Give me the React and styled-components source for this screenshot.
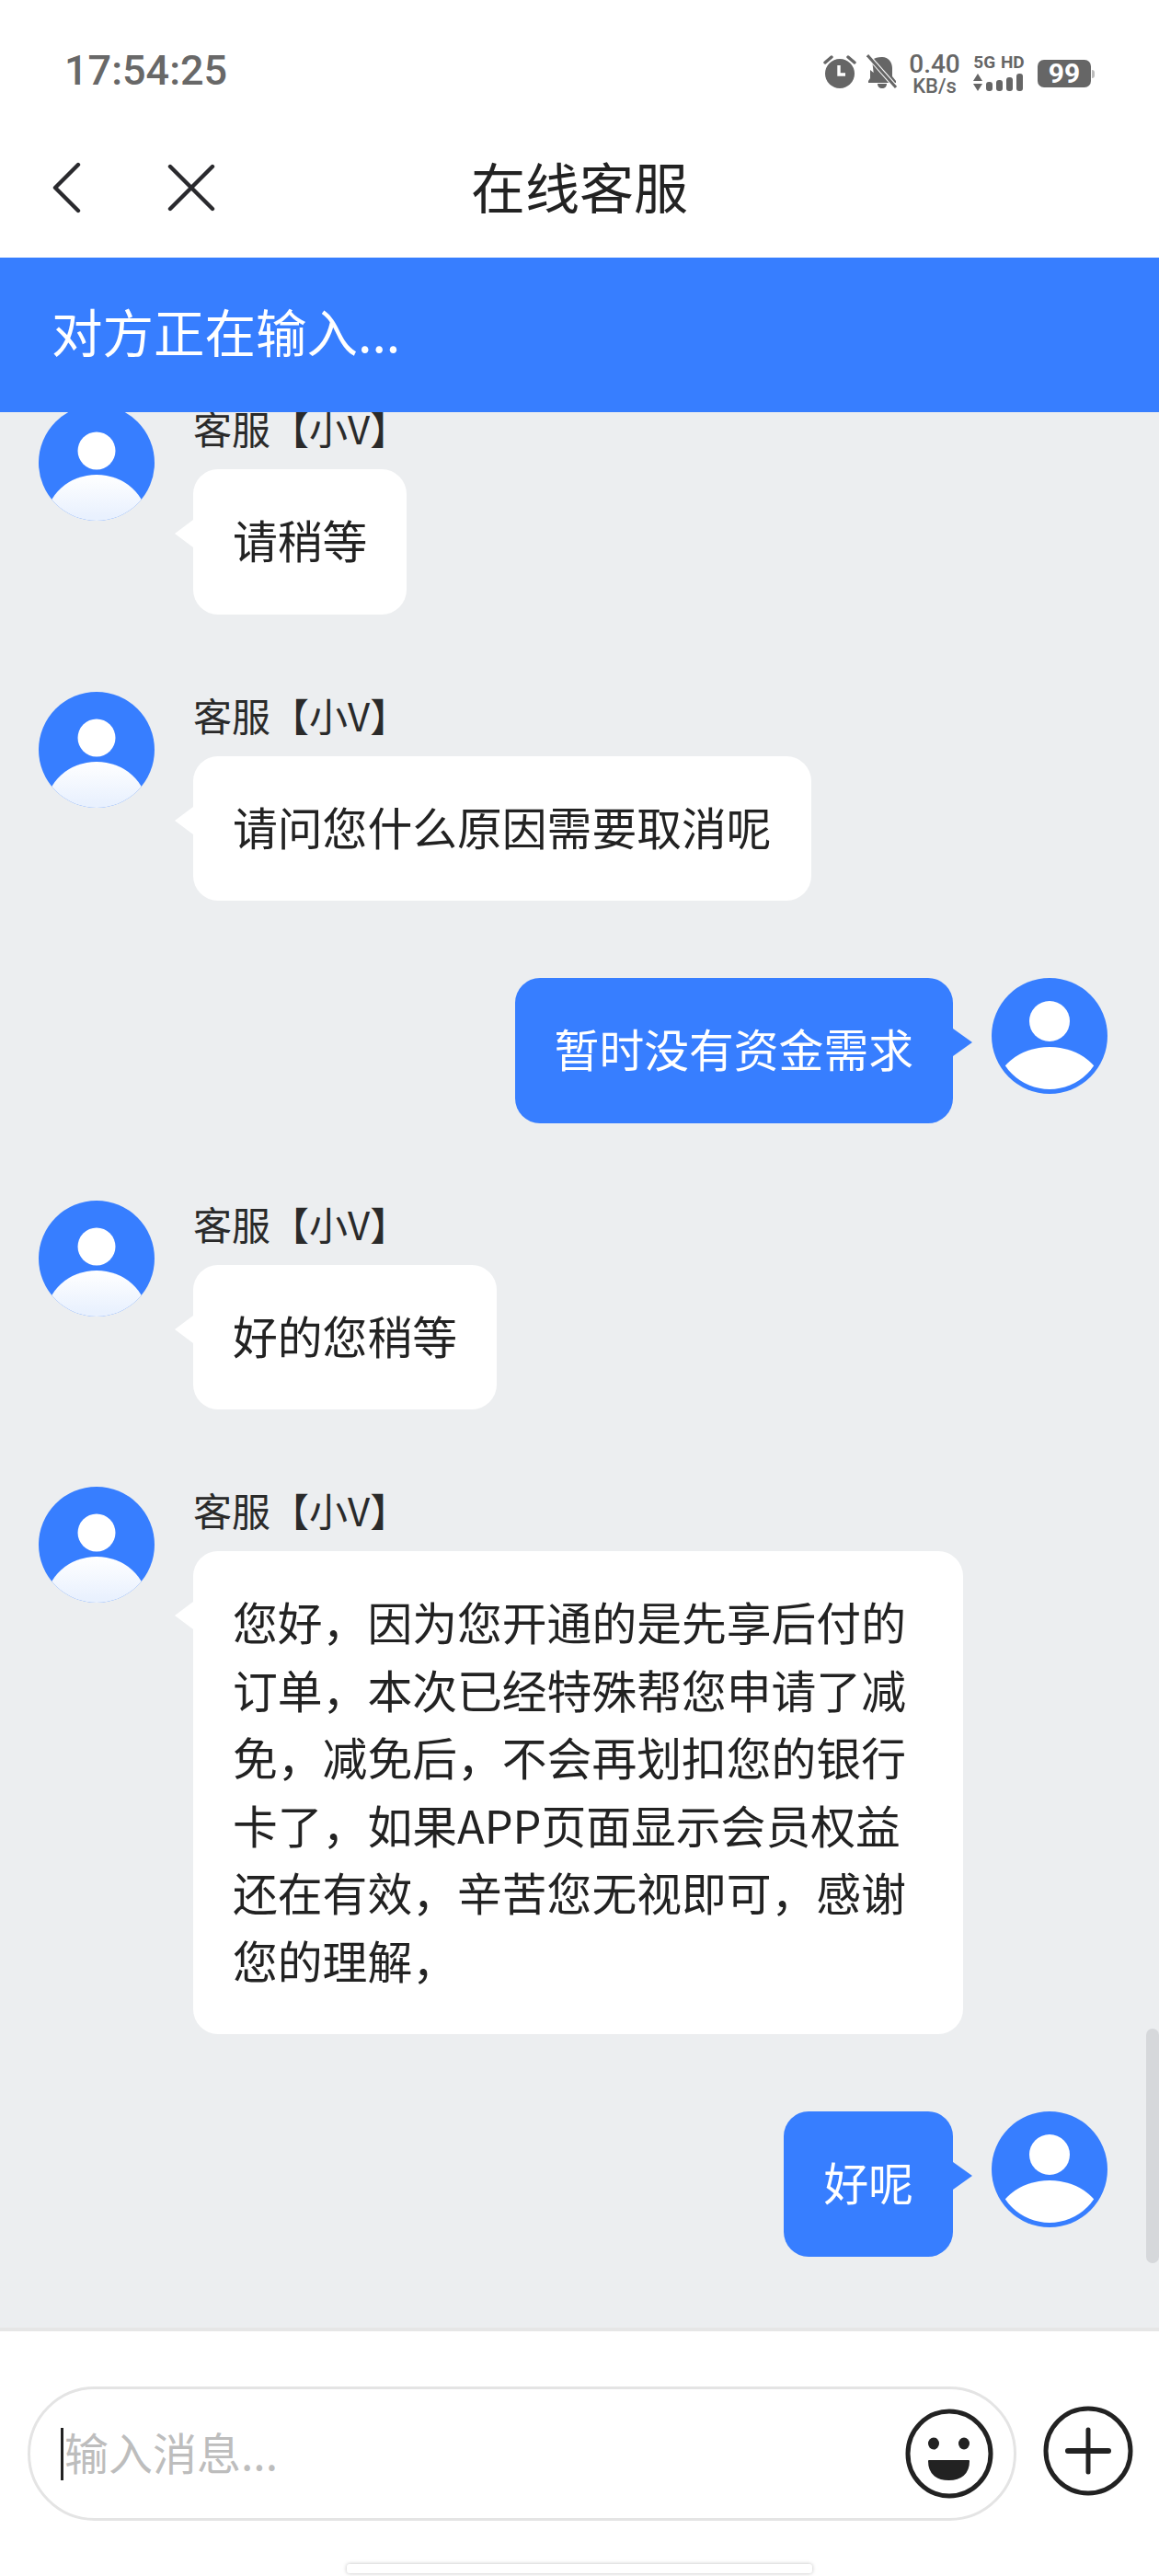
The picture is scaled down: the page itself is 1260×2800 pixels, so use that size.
import React from "react";
import styled, { createGlobalStyle } from "styled-components";

const Global = createGlobalStyle`
  html, body { margin: 0; padding: 0; background: #fff; }
  * { box-sizing: border-box; }
  body { font-family: "Noto Sans CJK SC", "Noto Sans", sans-serif; text-spacing-trim: space-all; }
`;
const BLUE = "#377eff";

const Page = styled.div`
  width: 1260px; height: 2800px; display: flex; flex-direction: column; background: #fff; overflow: hidden;
`;
const StatusBar = styled.div`
  height: 140px; flex: none; display: flex; justify-content: space-between; align-items: flex-start;
  padding: 51px 70px 0 70px; color: #666;
`;
const Clock = styled.div`
  font: 500 45px/52px Roboto, sans-serif; color: #686868;
`;
const StatusIcons = styled.div`
  display: flex; align-items: flex-start; padding-top: 8px;
`;
const Speed = styled.div`
  width: 58px; margin: -3px 12px 0 11px; display: flex; flex-direction: column; align-items: center; font-family: Roboto, sans-serif; font-weight: 500; color: #666;
`;
const SpeedValue = styled.span` font-size: 28px; line-height: 28px; `;
const SpeedUnit = styled.span` font-size: 22px; line-height: 20px; `;
const Net = styled.div`
  width: 58px; display: flex; flex-direction: column; align-items: center; gap: 3px;
`;
const NetLabel = styled.span`
  font: 700 19px/18px Roboto, sans-serif; color: #666; white-space: nowrap; word-spacing: 1px;
`;
const Battery = styled.div`
  position: relative; width: 58px; height: 30px; margin: 6px 4px 0 13px; border-radius: 7px; background: #666;
  color: #fff; font: 700 30px/30px Roboto, sans-serif; text-align: center;
  &::after { content: ""; position: absolute; left: 59px; top: 11px; width: 3px; height: 9px; border-radius: 0 3px 3px 0; background: #bbb; }
`;
const Nav = styled.div`
  height: 140px; flex: none; display: grid; grid-template-columns: 1fr auto 1fr; align-items: center; padding: 0 54px 10px 54px;
`;
const NavLeft = styled.div` display: flex; align-items: center; gap: 94px; margin-bottom: 3px; `;
const Title = styled.div`
  font-size: 59px; line-height: 70px; color: #222; margin-bottom: 6px;
`;
const Banner = styled.div`
  height: 168px; flex: none; background: ${BLUE}; color: #fff; font-size: 55.5px; display: flex; align-items: center; padding: 0 0 10px 56px;
`;
const Chat = styled.div`
  position: relative; height: 2082px; flex: none; overflow: hidden; background: #eceef0; padding: 0 56px 0 42px;
  display: flex; flex-direction: column; gap: 84px;
`;
const Scrollbar = styled.div`
  position: absolute; right: 0; top: 1757px; width: 14px; height: 255px; background: #d6d8db; border-radius: 8px;
`;
const Row = styled.div`
  display: flex; gap: 42px; flex: none; justify-content: ${p => (p.$mine ? "flex-end" : "flex-start")};
  &:first-of-type { margin-top: -8px; }
`;
const Column = styled.div` display: flex; flex-direction: column; align-items: flex-start; `;
const Name = styled.div`
  height: 70px; font-size: 42px; line-height: 50px; color: #2a2a2a; padding-left: 0; white-space: nowrap;
`;
const Bubble = styled.div`
  position: relative; border-radius: 27px; padding: 39px 43px 45px 43px; font-size: 48.8px; line-height: 73.5px;
  background: ${p => (p.$mine ? BLUE : "#fff")}; color: ${p => (p.$mine ? "#fff" : "#222")};
  max-width: 837px;
  &::before {
    content: ""; position: absolute; top: 55px; border-style: solid; border-width: 15px 0;
    border-color: transparent;
    ${p => p.$mine
      ? `left: 100%; border-left: 21px solid ${BLUE}; border-right: 0;`
      : `right: 100%; border-right: 20px solid #fff; border-left: 0;`}
  }
`;
const InputBar = styled.div`
  flex: 1; border-top: 4px solid #e6e6e6; display: flex; align-items: flex-start; padding: 60px 28px 0 30px; gap: 29px; position: relative;
`;
const InputBox = styled.div`
  width: 1077px; height: 146px; border: 3px solid #e4e4e4; border-radius: 73px; display: flex; align-items: center; justify-content: space-between;
  padding: 0 22px 0 33px;
`;
const Caret = styled.span` width: 3px; height: 57px; background: #222; flex: none; `;
const Placeholder = styled.span` font-size: 48px; line-height: 60px; color: #bdbdbd; margin: 0 auto 6px 1px; `;
const PlusWrap = styled.div` padding-top: 21px; `;
const HomeBar = styled.div`
  position: absolute; left: 377px; top: 253px; width: 506px; height: 10px; border-radius: 3px; background: #fff; box-shadow: 0 0 4px #bdbdbd;
`;

const Avatar = ({ mine }) => {
  const clip = mine ? "clip-mine" : "clip-agent";
  const fade = mine ? "fade-mine" : "fade-agent";
  return (
    <svg width="126" height="126" viewBox="0 0 126 126" style={{ flex: "none" }}>
      <defs>
        <linearGradient id={fade} x1="0" y1="0" x2="0" y2="1">
          <stop offset="0" stopColor="#fff" />
          <stop offset="0.45" stopColor={mine ? "#fff" : "#e9f1fe"} />
          <stop offset="1" stopColor={mine ? "#fff" : "#e9f1fe"} />
        </linearGradient>
        <clipPath id={clip}><circle cx="63" cy="63" r={mine ? 58 : 63} /></clipPath>
      </defs>
      <circle cx="63" cy="63" r="63" fill={BLUE} />
      <circle cx="63" cy={mine ? 47 : 50} r={mine ? 22 : 20.5} fill="#fff" />
      <g clipPath={`url(#${clip})`}>
        <ellipse cx="63" cy={mine ? 125 : 126} rx={mine ? 60 : 55} ry="50" fill={`url(#${fade})`} />
      </g>
    </svg>
  );
};

const Alarm = () => (
  <svg width="36" height="38" viewBox="0 0 36 38" style={{ marginRight: 11 }}>
    <circle cx="18" cy="21" r="16" fill="#666" />
    <path d="M17 12v10h7" stroke="#fff" strokeWidth="3.4" fill="none" />
    <path d="M2 9 9 3M34 9l-7-6" stroke="#666" strokeWidth="3.4" strokeLinecap="round" />
  </svg>
);
const BellOff = () => (
  <svg width="34" height="38" viewBox="0 0 34 38">
    <path d="M17 3c7 0 11 6 11 12v9l4 5v2H9L6 6c3-2 6-3 11-3ZM4 17l17 14H2v-2l2-3Z" fill="#666" />
    <path d="M12 32c0 3 2 5 5 5s5-2 5-5Z" fill="#666" />
    <path d="M2 2 32 36" stroke="#fff" strokeWidth="5" />
    <path d="M1 1l31 35" stroke="#666" strokeWidth="3" />
  </svg>
);
const Bars = () => (
  <svg width="56" height="20" viewBox="0 0 56 20">
    <path d="M5 0 10 8H0ZM0 11h10l-5 8Z" fill="#666" />
    <rect x="14" y="9" width="7" height="10" rx="3" fill="#666" />
    <rect x="25" y="7" width="7" height="12" rx="3" fill="#666" />
    <rect x="36" y="4" width="7" height="15" rx="3" fill="#666" />
    <rect x="47" y="0" width="7" height="19" rx="3" fill="#666" />
  </svg>
);
const Back = () => (
  <svg width="34" height="56" viewBox="0 0 34 56">
    <path d="M31 3 6 28l25 25" fill="none" stroke="#2a2a2e" strokeWidth="4.4" strokeLinecap="round" strokeLinejoin="round" />
  </svg>
);
const Close = () => (
  <svg width="52" height="52" viewBox="0 0 52 52">
    <path d="M3 3l46 46M49 3 3 49" fill="none" stroke="#2a2a2e" strokeWidth="4.4" strokeLinecap="round" />
  </svg>
);
const Smile = () => (
  <svg width="96" height="98" viewBox="0 0 96 98">
    <ellipse cx="48" cy="49" rx="45" ry="46" fill="none" stroke="#222" strokeWidth="5" />
    <ellipse cx="31" cy="38" rx="6" ry="6.500" fill="#222" />
    <ellipse cx="64" cy="38" rx="6" ry="6.500" fill="#222" />
    <path d="M26 57h43c0 14-9 20-21.500 20S26 71 26 57Z" fill="#222" stroke="#222" strokeWidth="2" strokeLinejoin="round" />
  </svg>
);
const Plus = () => (
  <svg width="98" height="98" viewBox="0 0 98 98">
    <circle cx="49" cy="49" r="46" fill="none" stroke="#222" strokeWidth="5" />
    <path d="M49 26v46" stroke="#222" strokeWidth="5" strokeLinecap="round" />
    <path d="M27 49h44" stroke="#222" strokeWidth="6" strokeLinecap="round" />
  </svg>
);

const Agent = ({ children }) => (
  <Row>
    <Avatar />
    <Column>
      <Name>客服【小V】</Name>
      <Bubble>{children}</Bubble>
    </Column>
  </Row>
);
const Mine = ({ children }) => (
  <Row $mine>
    <Bubble $mine>{children}</Bubble>
    <Avatar mine />
  </Row>
);

export default function App() {
  return (
    <Page>
      <Global />
      <StatusBar>
        <Clock>17:54:25</Clock>
        <StatusIcons>
          <Alarm />
          <BellOff />
          <Speed><SpeedValue>0.40</SpeedValue><SpeedUnit>KB/s</SpeedUnit></Speed>
          <Net><NetLabel>5G HD</NetLabel><Bars /></Net>
          <Battery>99</Battery>
        </StatusIcons>
      </StatusBar>
      <Nav>
        <NavLeft><Back /><Close /></NavLeft>
        <Title>在线客服</Title>
        <span />
      </Nav>
      <Banner>对方正在输入...</Banner>
      <Chat>
        <Agent>请稍等</Agent>
        <Agent>请问您什么原因需要取消呢</Agent>
        <Mine>暂时没有资金需求</Mine>
        <Agent>好的您稍等</Agent>
        <Agent>您好，因为您开通的是先享后付的订单，本次已经特殊帮您申请了减免，减免后，不会再划扣您的银行卡了，如果APP页面显示会员权益还在有效，辛苦您无视即可，感谢您的理解，</Agent>
        <Mine>好呢</Mine>
        <Scrollbar />
      </Chat>
      <InputBar>
        <InputBox>
          <Caret />
          <Placeholder>输入消息...</Placeholder>
          <Smile />
        </InputBox>
        <PlusWrap><Plus /></PlusWrap>
        <HomeBar />
      </InputBar>
    </Page>
  );
}
